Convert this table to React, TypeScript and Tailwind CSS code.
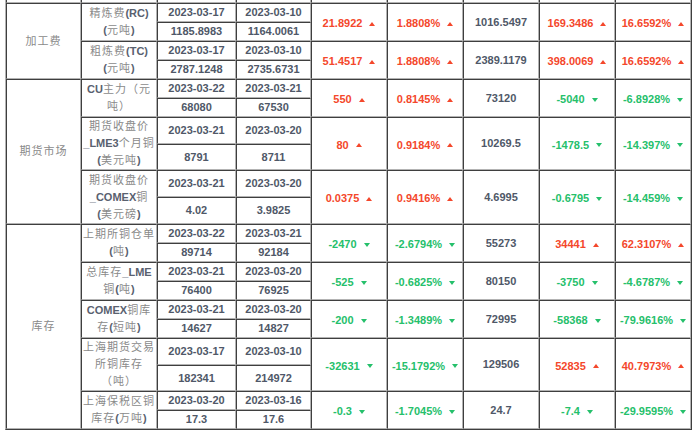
import React from "react";

type Item = {
  cat?: { label: string; span: number };
  name: string[];
  d1: string;
  v1: string;
  d2: string;
  v2: string;
  ch: string;
  pct: string;
  up: boolean;
  val: string;
  ch2: string;
  pct2: string;
  up2: boolean;
  h1: string;
  h2: string;
};

const items: Item[] = [
  { cat: { label: "加工费", span: 4 }, name: ["精炼费(RC)", "(元吨)"], d1: "2023-03-17", v1: "1185.8983", d2: "2023-03-10", v2: "1164.0061", ch: "21.8922", pct: "1.8808%", up: true, val: "1016.5497", ch2: "169.3486", pct2: "16.6592%", up2: true, h1: "h-[19px]", h2: "h-[19px]" },
  { name: ["粗炼费(TC)", "(元吨)"], d1: "2023-03-17", v1: "2787.1248", d2: "2023-03-10", v2: "2735.6731", ch: "51.4517", pct: "1.8808%", up: true, val: "2389.1179", ch2: "398.0069", pct2: "16.6592%", up2: true, h1: "h-[19px]", h2: "h-[19px]" },
  { cat: { label: "期货市场", span: 6 }, name: ["CU主力（元", "吨）"], d1: "2023-03-22", v1: "68080", d2: "2023-03-21", v2: "67530", ch: "550", pct: "0.8145%", up: true, val: "73120", ch2: "-5040", pct2: "-6.8928%", up2: false, h1: "h-[19px]", h2: "h-[19px]" },
  { name: ["期货收盘价", "_LME3个月铜", "(美元吨)"], d1: "2023-03-21", v1: "8791", d2: "2023-03-20", v2: "8711", ch: "80", pct: "0.9184%", up: true, val: "10269.5", ch2: "-1478.5", pct2: "-14.397%", up2: false, h1: "h-[27px]", h2: "h-[26px]" },
  { name: ["期货收盘价", "_COMEX铜", "(美元磅)"], d1: "2023-03-21", v1: "4.02", d2: "2023-03-20", v2: "3.9825", ch: "0.0375", pct: "0.9416%", up: true, val: "4.6995", ch2: "-0.6795", pct2: "-14.459%", up2: false, h1: "h-[27px]", h2: "h-[27px]" },
  { cat: { label: "库存", span: 10 }, name: ["上期所铜仓单", "(吨)"], d1: "2023-03-22", v1: "89714", d2: "2023-03-21", v2: "92184", ch: "-2470", pct: "-2.6794%", up: false, val: "55273", ch2: "34441", pct2: "62.3107%", up2: true, h1: "h-[19px]", h2: "h-[19px]" },
  { name: ["总库存_LME", "铜(吨)"], d1: "2023-03-21", v1: "76400", d2: "2023-03-20", v2: "76925", ch: "-525", pct: "-0.6825%", up: false, val: "80150", ch2: "-3750", pct2: "-4.6787%", up2: false, h1: "h-[19px]", h2: "h-[19px]" },
  { name: ["COMEX铜库", "存(短吨)"], d1: "2023-03-21", v1: "14627", d2: "2023-03-20", v2: "14827", ch: "-200", pct: "-1.3489%", up: false, val: "72995", ch2: "-58368", pct2: "-79.9616%", up2: false, h1: "h-[19px]", h2: "h-[19px]" },
  { name: ["上海期货交易", "所铜库存", "（吨）"], d1: "2023-03-17", v1: "182341", d2: "2023-03-10", v2: "214972", ch: "-32631", pct: "-15.1792%", up: false, val: "129506", ch2: "52835", pct2: "40.7973%", up2: true, h1: "h-[27px]", h2: "h-[26px]" },
  { name: ["上海保税区铜", "库存(万吨)"], d1: "2023-03-20", v1: "17.3", d2: "2023-03-16", v2: "17.6", ch: "-0.3", pct: "-1.7045%", up: false, val: "24.7", ch2: "-7.4", pct2: "-29.9595%", up2: false, h1: "h-[19px]", h2: "h-[19px]" },
];

const cell =
  "p-0 text-center align-middle border border-t-[#3f3f3f] border-l-[#3f3f3f] border-r-[#b3b3b3] border-b-[#b3b3b3]";

const num = "font-bold text-[11px] leading-[13px] text-[#4f5868] whitespace-nowrap";

function NameLine({ text }: { text: string }) {
  const parts = text.split(/([\x00-\x7F]+)/).filter((p) => p.length > 0);
  return (
    <div className="whitespace-nowrap">
      {parts.map((p, i) =>
        /^[\x00-\x7F]+$/.test(p) ? (
          <span key={i} className="font-bold tracking-normal text-[#59616f]">
            {p}
          </span>
        ) : (
          <span key={i}>{p}</span>
        )
      )}
    </div>
  );
}

function Change({ v, up }: { v: string; up: boolean }) {
  return (
    <span
      className={
        "inline-flex items-center font-bold text-[11px] leading-[13px] whitespace-nowrap " +
        (up ? "text-[#f4472b]" : "text-[#25c06b]")
      }
    >
      <span>{v}</span>
      <svg width="6" height="4" viewBox="0 0 6 4" className="ml-[7px]">
        {up ? (
          <polygon points="3,0 6,4 0,4" fill="currentColor" />
        ) : (
          <polygon points="0,0 6,0 3,4" fill="currentColor" />
        )}
      </svg>
    </span>
  );
}

export default function App() {
  const widths = [
    "w-[75px]",
    "w-[76px]",
    "w-[79px]",
    "w-[75px]",
    "w-[76px]",
    "w-[76px]",
    "w-[76px]",
    "w-[76px]",
    "w-[76px]",
  ];
  return (
    <div className="w-[696px] h-[434px] overflow-hidden bg-white pl-[5px] font-['Liberation_Sans','Noto_Sans_CJK_SC',sans-serif]">
      <table className="table-fixed w-[687px] border-separate border-spacing-0 border-l border-r border-b border-l-[#b3b3b3] border-r-[#3f3f3f] border-b-[#3f3f3f]">
        <tbody>
          <tr>
            {widths.map((w, i) => (
              <td
                key={i}
                className={
                  w +
                  " h-[3px] p-0 border-l border-r border-b border-l-[#3f3f3f] border-r-[#b3b3b3] border-b-[#b3b3b3]"
                }
              ></td>
            ))}
          </tr>
          {items.map((it, idx) => (
            <React.Fragment key={idx}>
              <tr>
                {it.cat && (
                  <td
                    rowSpan={it.cat.span}
                    className={cell + " text-[11px] tracking-[1px] text-[#8a8a8a]"}
                  >
                    {it.cat.label}
                  </td>
                )}
                <td
                  rowSpan={2}
                  className={cell + " text-[11px] leading-[17px] tracking-[1px] text-[#8a8a8a]"}
                >
                  {it.name.map((n, i) => (
                    <NameLine key={i} text={n} />
                  ))}
                </td>
                <td className={cell + " " + it.h1 + " " + num}>{it.d1}</td>
                <td className={cell + " " + it.h1 + " " + num}>{it.d2}</td>
                <td rowSpan={2} className={cell}>
                  <Change v={it.ch} up={it.up} />
                </td>
                <td rowSpan={2} className={cell}>
                  <Change v={it.pct} up={it.up} />
                </td>
                <td rowSpan={2} className={cell + " " + num}>
                  {it.val}
                </td>
                <td rowSpan={2} className={cell}>
                  <Change v={it.ch2} up={it.up2} />
                </td>
                <td rowSpan={2} className={cell}>
                  <Change v={it.pct2} up={it.up2} />
                </td>
              </tr>
              <tr>
                <td className={cell + " " + it.h2 + " " + num}>{it.v1}</td>
                <td className={cell + " " + it.h2 + " " + num}>{it.v2}</td>
              </tr>
            </React.Fragment>
          ))}
        </tbody>
      </table>
    </div>
  );
}
